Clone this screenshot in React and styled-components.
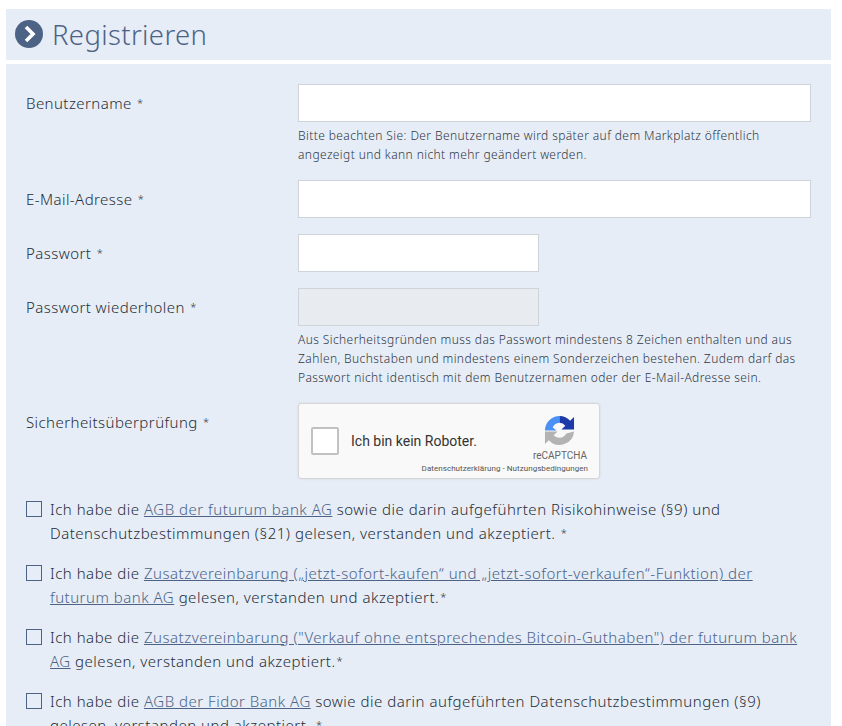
import styled, { createGlobalStyle } from "styled-components";

const GlobalStyle = createGlobalStyle`
  html, body {
    margin: 0;
    padding: 0;
    height: 726px;
    overflow: hidden;
    background: #fff;
  }
  body {
    font-family: "Noto Sans", sans-serif;
    color: #262d38;
  }
`;

const Page = styled.div`
  width: 825px;
  padding: 9px 0 0 6px;
`;

const Header = styled.h1`
  display: flex;
  align-items: center;
  gap: 9px;
  box-sizing: border-box;
  height: 51px;
  margin: 0 0 4px;
  padding: 0 0 1px 9px;
  background: #e6edf7;
  font-size: 27.5px;
  font-weight: 300;
  letter-spacing: 0.35px;
  color: #4d6386;
`;

const Panel = styled.form`
  background: #e6edf7;
  padding: 20px 20px 0;
`;

const Row = styled.div`
  display: grid;
  grid-template-columns: 272px 513px;
  margin-bottom: ${(p) => p.$gap || 16}px;
`;

const Label = styled.label`
  font-size: 15px;
  font-weight: 300;
  line-height: 38px;
  letter-spacing: 0.43px;
  color: #262d38;
`;

const Star = styled.span`
  margin-left: 1px;
  font-size: 11px;
  vertical-align: 2px;
`;

const Input = styled.input`
  display: block;
  box-sizing: border-box;
  width: ${(p) => p.$width || "100%"};
  height: 38px;
  border: 1px solid #cfd3da;
  background: ${(p) => (p.disabled ? "#e8ebef" : "#fff")};
  outline: none;
`;

const Hint = styled.p`
  margin: 4px 0 0;
  font-size: 12px;
  font-weight: 300;
  letter-spacing: 0.4px;
  line-height: 19px;
  color: #2f3642;
`;

const Captcha = styled.div`
  box-sizing: border-box;
  width: 302px;
  height: 76px;
  display: flex;
  align-items: center;
  position: relative;
  padding-left: 12px;
  border: 1px solid #d6d6d6;
  border-radius: 3px;
  background: #f9f9f9;
  box-shadow: 0 0 3px rgba(0, 0, 0, 0.08);
  font-family: Roboto, sans-serif;
`;

const CaptchaBox = styled.span`
  box-sizing: border-box;
  width: 28px;
  height: 28px;
  border: 2px solid #c1c1c1;
  border-radius: 2px;
  background: #fff;
`;

const CaptchaText = styled.span`
  margin-left: 12px;
  font-size: 14px;
  color: #333;
`;

const CaptchaLogo = styled.div`
  position: absolute;
  right: 12px;
  top: 11px;
  display: flex;
  flex-direction: column;
  align-items: center;
`;

const CaptchaName = styled.span`
  margin-top: 4px;
  font-size: 10px;
  color: #666;
`;

const CaptchaLinks = styled.span`
  position: absolute;
  right: 11px;
  bottom: 5px;
  font-size: 8px;
  letter-spacing: 0.05px;
  color: #555;
`;

const Consent = styled.label`
  display: grid;
  grid-template-columns: 24px 1fr;
  margin-bottom: 16px;
  font-size: 15px;
  font-weight: 300;
  line-height: 24px;
  letter-spacing: 0.5px;
  color: #262d38;
`;

const Box = styled.span`
  box-sizing: border-box;
  width: 16px;
  height: 16px;
  margin-top: 4px;
  border: 1px solid #4d6386;
  background: #e6edf7;
`;

const DocLink = styled.a`
  color: #4d6386;
  text-decoration: underline;
`;

const ChevronIcon = () => (
  <svg width="28" height="28" viewBox="0 0 28 28">
    <circle cx="14" cy="14" r="14" fill="#4d6386" />
    <path d="M11 7 L18 14 L11 21" fill="none" stroke="#fff" strokeWidth="3.6" />
  </svg>
);

const RecaptchaIcon = () => (
  <svg width="31" height="31" viewBox="0 0 32 32">
    <path d="M1 15 A15 15 0 0 1 16 1 L16 8 A8 8 0 0 0 9 13 L13 16 L1 16 Z" fill="#4a90f5" />
    <path d="M16 1 A15 15 0 0 1 27 6 L31 2 L31 15 L18 15 L22 11 A8 8 0 0 0 16 8 Z" fill="#1c3aa9" />
    <path d="M1 17 L14 17 L10 21 A8 8 0 0 0 23 19 L31 17 A15 15 0 0 1 5 26 L1 30 Z" fill="#b3b3b3" />
  </svg>
);

const consents = [
  {
    link: "AGB der futurum bank AG",
    rest: " sowie die darin aufgeführten Risikohinweise (§9) und Datenschutzbestimmungen (§21) gelesen, verstanden und akzeptiert. ",
  },
  {
    link: "Zusatzvereinbarung („jetzt-sofort-kaufen“ und „jetzt-sofort-verkaufen“-Funktion) der futurum bank AG",
    rest: " gelesen, verstanden und akzeptiert.",
  },
  {
    link: 'Zusatzvereinbarung ("Verkauf ohne entsprechendes Bitcoin-Guthaben") der futurum bank AG',
    rest: " gelesen, verstanden und akzeptiert.",
  },
  {
    link: "AGB der Fidor Bank AG",
    rest: " sowie die darin aufgeführten Datenschutzbestimmungen (§9) gelesen, verstanden und akzeptiert. ",
  },
];

export default function App() {
  return (
    <Page>
      <GlobalStyle />
      <Header>
        <ChevronIcon />
        Registrieren
      </Header>
      <Panel>
        <Row>
          <Label>Benutzername <Star>*</Star></Label>
          <div>
            <Input />
            <Hint>
              Bitte beachten Sie: Der Benutzername wird später auf dem Markplatz öffentlich
              angezeigt und kann nicht mehr geändert werden.
            </Hint>
          </div>
        </Row>
        <Row>
          <Label>E-Mail-Adresse <Star>*</Star></Label>
          <Input />
        </Row>
        <Row>
          <Label>Passwort <Star>*</Star></Label>
          <Input $width="241px" />
        </Row>
        <Row>
          <Label>Passwort wiederholen <Star>*</Star></Label>
          <div>
            <Input $width="241px" disabled />
            <Hint>
              Aus Sicherheitsgründen muss das Passwort mindestens 8 Zeichen enthalten und aus
              Zahlen, Buchstaben und mindestens einem Sonderzeichen bestehen. Zudem darf das
              Passwort nicht identisch mit dem Benutzernamen oder der E-Mail-Adresse sein.
            </Hint>
          </div>
        </Row>
        <Row $gap={18}>
          <Label>Sicherheitsüberprüfung <Star>*</Star></Label>
          <Captcha>
            <CaptchaBox />
            <CaptchaText>Ich bin kein Roboter.</CaptchaText>
            <CaptchaLogo>
              <RecaptchaIcon />
              <CaptchaName>reCAPTCHA</CaptchaName>
            </CaptchaLogo>
            <CaptchaLinks>Datenschutzerklärung - Nutzungsbedingungen</CaptchaLinks>
          </Captcha>
        </Row>
        {consents.map(({ link, rest }) => (
          <Consent key={link}>
            <Box />
            <span>
              Ich habe die <DocLink href="#">{link}</DocLink>
              {rest}
              <Star>*</Star>
            </span>
          </Consent>
        ))}
      </Panel>
    </Page>
  );
}
